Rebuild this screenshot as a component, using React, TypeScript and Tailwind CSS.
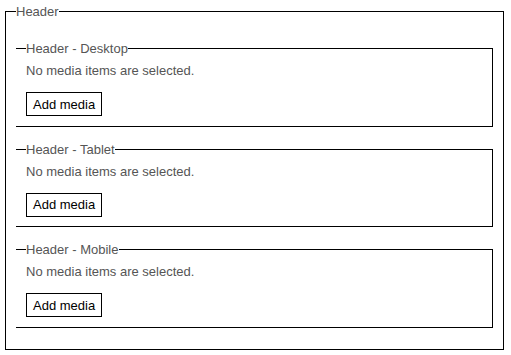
import React from 'react'

const sections = ['Header - Desktop', 'Header - Tablet', 'Header - Mobile']

function MediaField({ label }: { label: string }) {
  return (
    <fieldset className="border-t border-r border-b border-black pl-[10px] pb-[9.5px]">
      <legend className="text-[13px] leading-[15px] text-[#555]">{label}</legend>
      <p className="mt-[7px] text-[13px] leading-[15px] text-[#555]">No media items are selected.</p>
      <button
        type="button"
        className="mt-[14px] h-[24px] border border-black bg-white px-[6px] text-[13px] leading-[15px] text-black"
      >
        Add media
      </button>
    </fieldset>
  )
}

export default function App() {
  return (
    <div className="bg-white pt-[4px] pl-[5px] pr-[7px]" style={{ fontFamily: '"Liberation Sans", Arial, sans-serif' }}>
      <fieldset className="border border-black px-[10px] pt-[22px] pb-[21px]">
        <legend className="text-[13px] leading-[15px] text-[#555]">Header</legend>
        <div className="flex flex-col gap-[15px]">
          {sections.map((s) => (
            <MediaField key={s} label={s} />
          ))}
        </div>
      </fieldset>
    </div>
  )
}
